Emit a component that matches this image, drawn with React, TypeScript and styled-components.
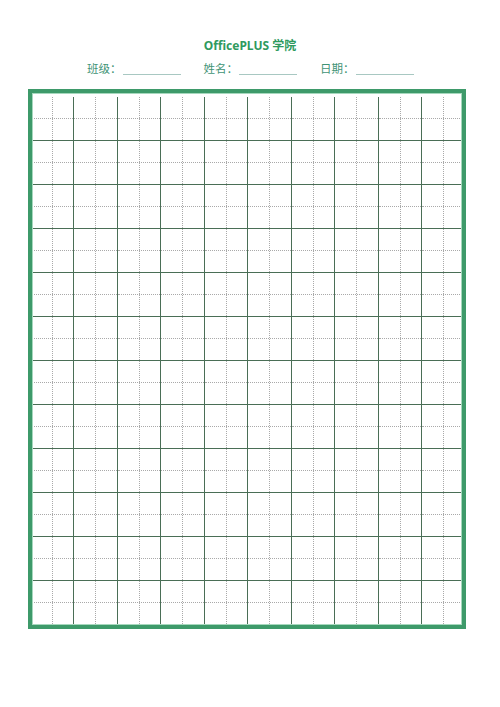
import React from "react";
import styled, { createGlobalStyle } from "styled-components";

const Global = createGlobalStyle`
  html, body { margin: 0; padding: 0; background: #ffffff; }
  body { font-family: "Noto Sans", "Noto Sans CJK SC", sans-serif; }
`;

const Page = styled.div`
  width: 500px;
  height: 707px;
  padding-top: 37px;
  box-sizing: border-box;
  display: flex;
  flex-direction: column;
`;

const Title = styled.div`
  height: 18px;
  line-height: 18px;
  text-align: center;
  font-size: 12px;
  font-weight: 700;
  color: #2f9a5e;
  font-family: "Noto Sans", "Noto Sans CJK SC", sans-serif;
`;

const InfoRow = styled.div`
  display: flex;
  align-items: flex-end;
  gap: 23px;
  padding-left: 87px;
  margin-top: 6px;
  height: 14px;
`;

const Field = styled.div`
  display: flex;
  align-items: flex-end;
`;

const Label = styled.span`
  font-size: 11.5px;
  line-height: 14px;
  color: #3f9476;
  font-family: "Noto Sans CJK SC", sans-serif;
`;

const Blank = styled.span`
  width: 58px;
  height: 1px;
  margin-left: 1px;
  margin-bottom: 0px;
  background: #a8c8c2;
`;

const Frame = styled.div`
  position: relative;
  margin-top: 14px;
  margin-left: 28px;
  width: 438px;
  height: 540px;
  box-sizing: border-box;
  padding: 8px 0 0 3px;
  overflow: hidden;
  &::after {
    content: "";
    position: absolute;
    inset: 0;
    border: 4px solid #3e9a6a;
    box-shadow: inset 0 0 0 1px #a6d8bd;
    pointer-events: none;
  }
`;

const Grid = styled.div`
  display: grid;
  grid-template-columns: repeat(10, 43.45px);
  grid-template-rows: repeat(12, 44px);
`;

const Cell = styled.div`
  position: relative;
  box-sizing: border-box;
  border-right: 1px solid #4a6e56;
  border-bottom: 1px solid #4a6e56;
  &::before {
    content: "";
    position: absolute;
    left: 21px;
    top: 0;
    bottom: 0;
    border-left: 1px dotted #a9a9a9;
  }
  &::after {
    content: "";
    position: absolute;
    top: 21px;
    left: 0;
    right: 0;
    border-top: 1px dotted #a9a9a9;
  }
`;

const fields = ["班级：", "姓名：", "日期："];

export default function App() {
  const cells = Array.from({ length: 120 }, (_, i) => i);
  return (
    <>
      <Global />
      <Page>
        <Title>OfficePLUS 学院</Title>
        <InfoRow>
          {fields.map((f) => (
            <Field key={f}>
              <Label>{f}</Label>
              <Blank />
            </Field>
          ))}
        </InfoRow>
        <Frame>
          <Grid>
            {cells.map((i) => (
              <Cell key={i} />
            ))}
          </Grid>
        </Frame>
      </Page>
    </>
  );
}
